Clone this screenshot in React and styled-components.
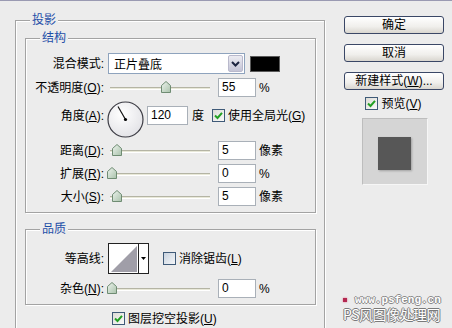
import styled, { createGlobalStyle } from "styled-components";

const GlobalStyle = createGlobalStyle`
  html, body { margin: 0; padding: 0; }
  body {
    background: #ececec;
    font-family: "Liberation Sans", "Noto Sans CJK SC", sans-serif;
    font-size: 12px;
    color: #000;
  }
`;

const Window = styled.div`
  width: 452px;
  height: 328px;
  box-sizing: border-box;
  border-top: 1px solid #9a9ab2;
  display: flex;
  overflow: hidden;
  background: #ececec;
`;

const Main = styled.div`
  padding: 12px 0 0 15px;
  flex: none;
`;

const Group = styled.fieldset`
  margin: ${(p) => p.$margin || "0"};
  padding: ${(p) => p.$pad || "0"};
  width: ${(p) => p.$width || "auto"};
  box-sizing: border-box;
  border: 1px solid #a3a3a3;
  box-shadow: inset 1px 1px 0 #fff, 1px 1px 0 #fff;
  min-inline-size: 0;
`;

const Legend = styled.legend`
  margin-left: 14px;
  padding: 0 2px;
  font-size: 12px;
  line-height: 14px;
  color: #1f4fa8;
  background: #ececec;
`;

const Rows = styled.div`
  display: flex;
  flex-direction: column;
  gap: ${(p) => p.$gap || 4}px;
`;

const Row = styled.div`
  display: flex;
  align-items: center;
  height: ${(p) => p.$h || 19}px;
  padding-bottom: ${(p) => p.$pb || 0}px;
  margin-left: ${(p) => p.$ml || 0}px;
  margin-top: ${(p) => p.$mt || 0}px;
`;

const Label = styled.div`
  flex: none;
  width: 81px;
  box-sizing: border-box;
  padding-right: 3px;
  text-align: right;
  line-height: 14px;
  white-space: nowrap;
`;

const Select = styled.div`
  margin-left: 1px;
  width: 137px;
  height: 21px;
  box-sizing: border-box;
  border: 1px solid #8ea3bd;
  background: #fff;
  display: flex;
  align-items: center;
  justify-content: space-between;
  padding-left: 5px;
`;

const SelectArrow = styled.div`
  width: 15px;
  height: 17px;
  margin-right: 1px;
  box-sizing: border-box;
  border: 1px solid #b9b9cc;
  border-radius: 2px;
  background: linear-gradient(#ececf2, #c4c4d6);
  display: flex;
  align-items: center;
  justify-content: center;
`;

const Swatch = styled.div`
  margin-left: 5px;
  width: 30px;
  height: 16px;
  box-sizing: border-box;
  border: 1px solid #5a5a5a;
  background: #000;
`;

const SliderBox = styled.div`
  position: relative;
  margin-left: 1px;
  width: 102px;
  height: 14px;
  flex: none;
`;

const Track = styled.div`
  margin-top: 6px;
  margin-left: 2px;
  height: 1px;
  border-top: 1px solid #b4b4a4;
  border-bottom: 1px solid #fff;
  background: #e8e8d8;
`;

const Thumb = styled.svg`
  position: absolute;
  top: 0;
`;

const Field = styled.div`
  flex: none;
  margin-left: ${(p) => p.$ml ?? 8}px;
  width: ${(p) => p.$w || 38}px;
  height: 19px;
  box-sizing: border-box;
  border: 1px solid #a9b0b8;
  background: #fff;
  padding-left: 3px;
  line-height: 17px;
  font-size: 12px;
`;

const Unit = styled.span`
  margin-left: ${(p) => p.$ml ?? 3}px;
  line-height: 14px;
`;

const Box = styled.div`
  flex: none;
  margin-left: ${(p) => p.$ml || 0}px;
  width: 13px;
  height: 13px;
  box-sizing: border-box;
  border: 1px solid #3f5a78;
  background: ${(p) =>
    p.$checked
      ? "linear-gradient(135deg, #dcdcd6, #fafafa)"
      : "linear-gradient(135deg, #c9d3df, #f4f6f8)"};
  display: flex;
  align-items: center;
  justify-content: center;
`;

const CheckText = styled.span`
  margin-left: 3px;
  line-height: 14px;
  white-space: nowrap;
`;

const DialWrap = styled.svg`
  flex: none;
  margin-bottom: -7px;
`;

const Contour = styled.div`
  flex: none;
  margin-left: 1px;
  width: 41px;
  height: 31px;
  box-sizing: border-box;
  border: 1px solid #222;
  background: #fff;
  display: flex;
`;

const ContourPic = styled.svg`
  border-right: 1px solid #222;
`;

const ContourDrop = styled.div`
  flex: 1;
  display: flex;
  align-items: center;
  justify-content: center;
`;

const Side = styled.div`
  margin-left: 19px;
  width: 100px;
  padding-top: 15px;
  display: flex;
  flex-direction: column;
`;

const Button = styled.div`
  height: 18px;
  margin-bottom: 10px;
  box-sizing: border-box;
  border: 1px solid #3a4766;
  border-radius: 3px;
  background: linear-gradient(#ffffff, #f0efec 60%, #d9d6cf);
  text-align: center;
  line-height: 16px;
  white-space: nowrap;
`;

const PreviewRow = styled.div`
  margin-top: -3px;
  display: flex;
  align-items: center;
  justify-content: center;
  height: 13px;
  padding-right: 1px;
`;

const PreviewBox = styled.div`
  margin-top: 8px;
  align-self: center;
  margin-left: 1px;
  width: 66px;
  height: 67px;
  box-sizing: border-box;
  border: 1px solid;
  border-color: #bdbdbd #f6f6f6 #f6f6f6 #bdbdbd;
  background: #d5d5d5;
  display: flex;
  align-items: center;
  justify-content: center;
  padding-top: 4px;
`;

const Shadowed = styled.div`
  width: 33px;
  height: 33px;
  background: #575757;
  box-shadow: 1px 1px 2px rgba(0, 0, 0, 0.25);
`;

const Watermark = styled.div`
  margin-top: auto;
  margin-left: -1px;
  margin-right: -10px;
  padding-bottom: 6px;
  display: flex;
  flex-direction: column;
`;

const MarkLine = styled.div`
  display: flex;
  align-items: center;
  height: 11px;
  font-family: "Liberation Mono", monospace;
  font-weight: bold;
  font-size: 11px;
  color: #fff;
  white-space: nowrap;
  text-shadow: 1px 0 0 #8a8a8a, -1px 0 0 #8a8a8a, 0 1px 0 #8a8a8a, 0 -1px 0 #8a8a8a;
`;

const Dot = styled.span`
  width: 4px;
  height: 4px;
  background: #b42850;
  box-shadow: 0 0 2px #e06080;
  margin-right: 8px;
`;

const MarkTitle = styled.div`
  margin-top: 1px;
  font-family: "Noto Sans CJK SC", sans-serif;
  font-size: 14px;
  line-height: 16px;
  color: #fff;
  letter-spacing: -0.5px;
  white-space: nowrap;
  text-shadow: 1px 0 0 #7a7a7a, -1px 0 0 #7a7a7a, 0 1px 0 #7a7a7a, 0 -1px 0 #7a7a7a;
`;

function Slider({ value }) {
  const center = 4 + value * 0.98;
  return (
    <SliderBox>
      <Track />
      <Thumb width="10" height="12" viewBox="0 0 10 12" style={{ left: center - 5 }}>
        <defs>
          <linearGradient id="tg" x1="0" y1="0" x2="1" y2="1">
            <stop offset="0" stopColor="#eef4ee" />
            <stop offset="1" stopColor="#a9c2ab" />
          </linearGradient>
        </defs>
        <path d="M0.5 4.5 L5 0.5 L9.5 4.5 L9.5 11.5 L0.5 11.5 Z" fill="url(#tg)" stroke="#6f8c73" />
      </Thumb>
    </SliderBox>
  );
}

function Check({ checked, ml }) {
  return (
    <Box $checked={checked} $ml={ml}>
      {checked && (
        <svg width="9" height="9" viewBox="0 0 9 9">
          <path d="M1 4.5 L3.5 7 L8 1.8" fill="none" stroke="#23a023" strokeWidth="2" />
        </svg>
      )}
    </Box>
  );
}

function Dial() {
  const a = (120 * Math.PI) / 180;
  const x = 18.5 + Math.cos(a) * 15;
  const y = 18.5 - Math.sin(a) * 15;
  return (
    <DialWrap width="37" height="37" viewBox="0 0 37 37">
      <defs>
        <radialGradient id="dg" cx="0.4" cy="0.35" r="0.7">
          <stop offset="0" stopColor="#ffffff" />
          <stop offset="1" stopColor="#e2e2e6" />
        </radialGradient>
      </defs>
      <circle cx="18.5" cy="18.5" r="17.5" fill="url(#dg)" stroke="#3c3c44" strokeWidth="1.2" />
      <line x1="18.5" y1="18.5" x2={x} y2={y} stroke="#111" strokeWidth="1.2" />
      <circle cx="18.5" cy="18.5" r="1.6" fill="#000" />
    </DialWrap>
  );
}

function SliderRow({ label, value, text, unit }) {
  return (
    <Row>
      <Label>{label}</Label>
      <Slider value={value} />
      <Field>{text}</Field>
      <Unit>{unit}</Unit>
    </Row>
  );
}

export default function App() {
  return (
    <>
      <GlobalStyle />
      <Window>
        <Main>
          <Group $width="310px" $pad="4px 0 40px">
            <Legend>投影</Legend>
            <Group $margin="0 8px 0 9px" $pad="8px 0 6px">
              <Legend>结构</Legend>
              <Rows>
                <Row $h={21}>
                  <Label>混合模式:</Label>
                  <Select>
                    <span>正片叠底</span>
                    <SelectArrow>
                      <svg width="9" height="6" viewBox="0 0 9 6">
                        <path d="M1 1 L4.5 4.5 L8 1" fill="none" stroke="#1c2440" strokeWidth="2" />
                      </svg>
                    </SelectArrow>
                  </Select>
                  <Swatch />
                </Row>
                <SliderRow
                  label={<>不透明度(<u>O</u>):</>}
                  value={55}
                  text="55"
                  unit="%"
                />
                <Row $h={29} $pb={7}>
                  <Label>角度(<u>A</u>):</Label>
                  <Dial />
                  <Field $ml={3} $w={41}>120</Field>
                  <Unit $ml={4}>度</Unit>
                  <Check checked ml={8} />
                  <CheckText>使用全局光(<u>G</u>)</CheckText>
                </Row>
                <SliderRow label={<>距离(<u>D</u>):</>} value={5} text="5" unit="像素" />
                <SliderRow label={<>扩展(<u>R</u>):</>} value={0} text="0" unit="%" />
                <SliderRow label={<>大小(<u>S</u>):</>} value={5} text="5" unit="像素" />
              </Rows>
            </Group>
            <Group $margin="9px 8px 0 9px" $pad="7px 0 6px">
              <Legend>品质</Legend>
              <Rows $gap={5}>
                <Row $h={31}>
                  <Label>等高线:</Label>
                  <Contour>
                    <ContourPic width="29" height="29" viewBox="0 0 29 29">
                      <path d="M2 28 L28 2 L28 28 Z" fill="#a09ea8" />
                    </ContourPic>
                    <ContourDrop>
                      <svg width="5" height="3" viewBox="0 0 5 3">
                        <path d="M0 0 L5 0 L2.5 3 Z" fill="#000" />
                      </svg>
                    </ContourDrop>
                  </Contour>
                  <Check ml={14} />
                  <CheckText>消除锯齿(<u>L</u>)</CheckText>
                </Row>
                <SliderRow label={<>杂色(<u>N</u>):</>} value={0} text="0" unit="%" />
              </Rows>
            </Group>
            <Row $h={13} $ml={96} $mt={7}>
              <Check checked />
              <CheckText>图层挖空投影(<u>U</u>)</CheckText>
            </Row>
          </Group>
        </Main>
        <Side>
          <Button>确定</Button>
          <Button>取消</Button>
          <Button>新建样式(<u>W</u>)...</Button>
          <PreviewRow>
            <Check checked />
            <CheckText>预览(<u>V</u>)</CheckText>
          </PreviewRow>
          <PreviewBox>
            <Shadowed />
          </PreviewBox>
          <Watermark>
            <MarkLine>
              <Dot />
              www.psfeng.cn
            </MarkLine>
            <MarkTitle>PS风图像处理网</MarkTitle>
          </Watermark>
        </Side>
      </Window>
    </>
  );
}
